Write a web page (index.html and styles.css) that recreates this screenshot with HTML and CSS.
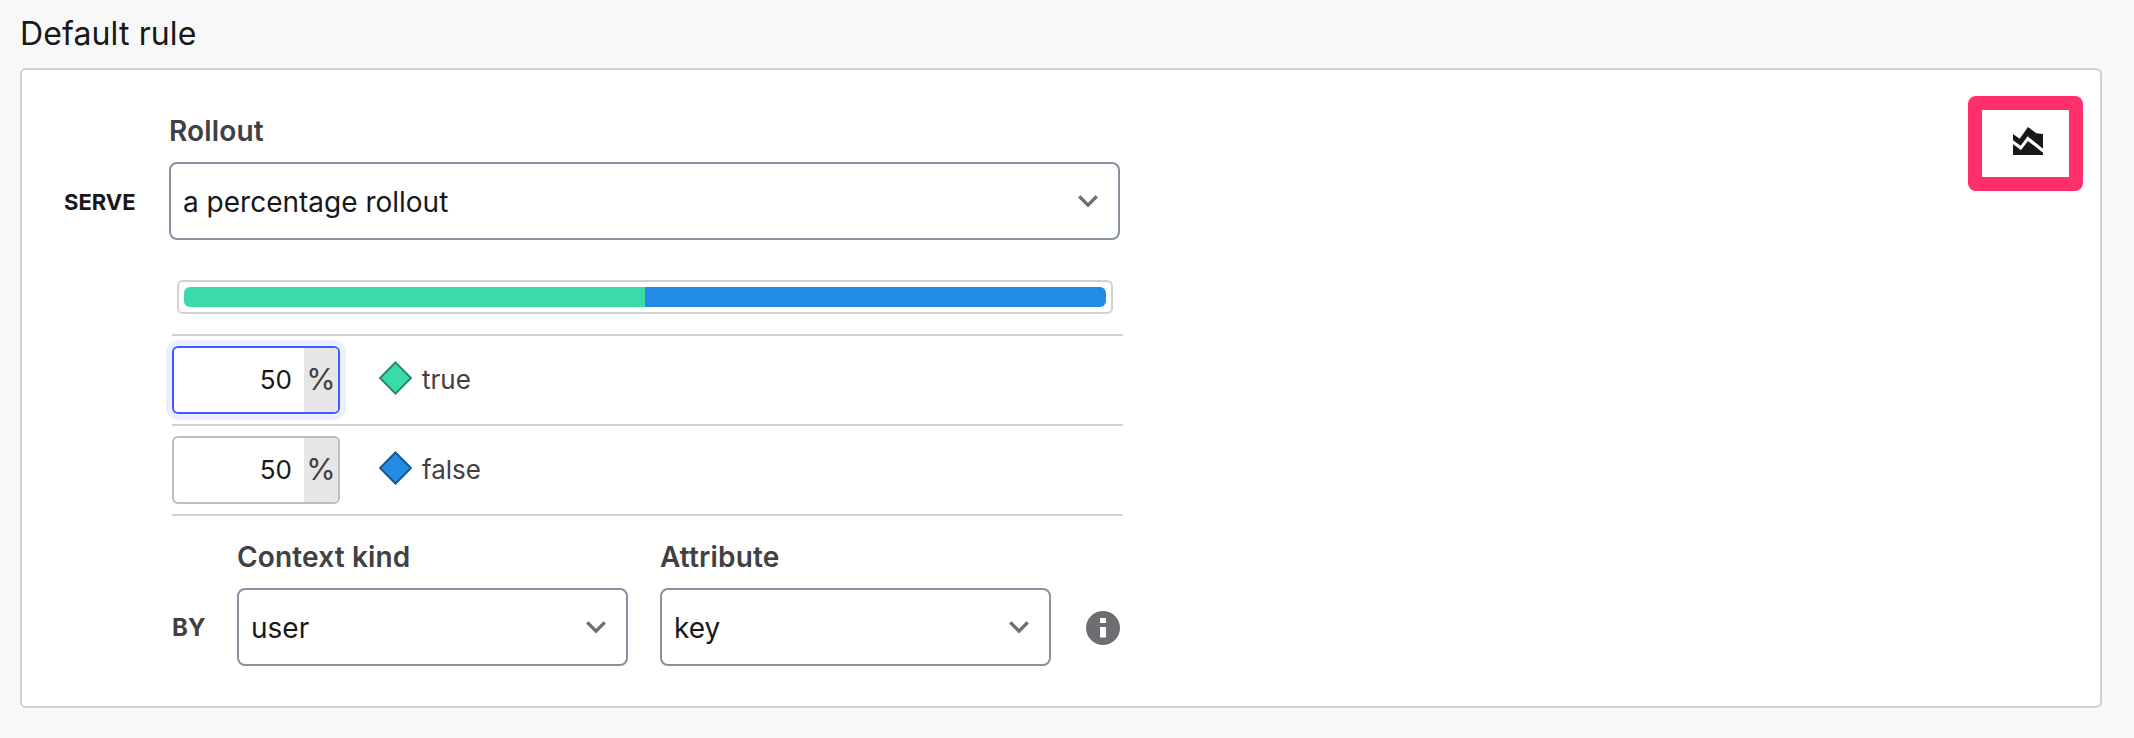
FILE: index.html
```html
<!DOCTYPE html>
<html lang="en">
<head>
<meta charset="utf-8">
<title>Default rule</title>
<link rel="stylesheet" href="styles.css">
</head>
<body>
<h1 class="title">Default rule</h1>
<section class="card">
  <div class="rule">
    <div class="serve-row">
      <span class="keyword serve">SERVE</span>
      <div class="field">
        <label class="label">Rollout</label>
        <div class="select"><span>a percentage rollout</span>
          <svg class="chevron" viewBox="0 0 20 13"><path d="M1.3 1.4 10 10.2 18.7 1.4"/></svg>
        </div>
      </div>
    </div>
    <div class="rollout">
      <div class="bar"><div class="part green"></div><div class="part blue"></div></div>
      <div class="variation">
        <div class="percent focused"><span class="value">50</span><span class="unit">%</span></div>
        <svg class="diamond" viewBox="0 0 34 34"><path class="diamond-green" d="M16.5 1.4 32 17 16.5 32.6 1 17Z"/></svg>
        <span class="name">true</span>
      </div>
      <div class="variation">
        <div class="percent"><span class="value">50</span><span class="unit">%</span></div>
        <svg class="diamond" viewBox="0 0 34 34"><path class="diamond-blue" d="M16.5 1.4 32 17 16.5 32.6 1 17Z"/></svg>
        <span class="name">false</span>
      </div>
      <div class="by-row">
        <span class="keyword by">BY</span>
        <div class="field">
          <label class="label">Context kind</label>
          <div class="select"><span>user</span>
            <svg class="chevron" viewBox="0 0 20 13"><path d="M1.3 1.4 10 10.2 18.7 1.4"/></svg>
          </div>
        </div>
        <div class="field">
          <label class="label">Attribute</label>
          <div class="select"><span>key</span>
            <svg class="chevron" viewBox="0 0 20 13"><path d="M1.3 1.4 10 10.2 18.7 1.4"/></svg>
          </div>
        </div>
        <svg class="info" viewBox="0 0 34 34"><circle cx="17" cy="17" r="17"/><path d="M14 7h6v5h-6zM14 16h6v10.500h-6z"/></svg>
      </div>
    </div>
  </div>
  <button class="chart-button" aria-label="Show chart">
    <svg class="chart" viewBox="0 0 90 85"><path d="M0 21 20 35 45 0 70 19 90 21V65L44 28 23 56 0 40ZM0 52 24 69 45 42 90 77V85H0Z"/></svg>
  </button>
</section>
</body>
</html>
```

FILE: styles.css
```css
* { box-sizing: border-box; }
body {
  margin: 0;
  padding: 0 32px 0 20px;
  height: 738px;
  background: #f8f8f8;
  color: #181818;
  font-family: Inter, "Liberation Sans", sans-serif;
}
svg { display: block; flex: none; }
.title {
  margin: 0;
  height: 68px;
  line-height: 68px;
  font-size: 32px;
  font-weight: 400;
  letter-spacing: 0.12px;
}
.card {
  display: flex;
  justify-content: space-between;
  align-items: flex-start;
  height: 640px;
  padding: 26px 17px 0 40px;
  border: 2px solid #d1d1d1;
  border-radius: 6px;
  background: #fff;
}
.rule { padding-top: 14px; }
.serve-row { display: flex; align-items: flex-end; }
.keyword {
  height: 78px;
  line-height: 80px;
  font-weight: 700;
}
.serve { width: 107px; padding-left: 2px; font-size: 22px; }
.field { width: 391px; }
.serve-row .field { width: 951px; }
.label {
  display: block;
  height: 52px;
  line-height: 42px;
  font-size: 28px;
  font-weight: 600;
  letter-spacing: 0.15px;
  color: #414042;
}
.select {
  display: flex;
  align-items: center;
  justify-content: space-between;
  height: 78px;
  padding: 0 20px 0 12px;
  border: 2px solid #8891a0;
  border-radius: 8px;
  font-size: 28px;
  line-height: 34px;
}
.select span { padding-top: 1px; }
.chevron { width: 20px; height: 13px; fill: none; stroke: #6d6e71; stroke-width: 3.4; }
.rollout { width: 951px; margin: 40px 0 0 110px; }
.bar {
  display: flex;
  width: 936px;
  height: 34px;
  margin: 0 0 20px 5px;
  padding: 5px;
  border: 2px solid #d1d1d1;
  border-radius: 6px;
}
.part { flex: 1; }
.green { background: #3adaab; border-radius: 6px 0 0 6px; }
.blue { background: #218be6; border-radius: 0 6px 6px 0; }
.variation {
  display: flex;
  align-items: center;
  height: 90px;
  border-top: 2px solid #d1d1d1;
}
.percent {
  display: flex;
  width: 168px;
  height: 68px;
  border: 2px solid #bcbcbc;
  border-radius: 6px;
  font-size: 26px;
  line-height: 64px;
}
.focused { border-color: #405bff; box-shadow: 0 0 0 6px #edefff; }
.value { width: 130px; padding-right: 12px; text-align: right; }
.unit {
  width: 34px;
  border-radius: 0 4px 4px 0;
  background: #e6e6e6;
  color: #414042;
  font-size: 30px;
  line-height: 63px;
  text-align: center;
}
.diamond { width: 34px; height: 34px; margin: 0 9px 4px 39px; stroke-width: 1.8; }
.diamond-green { fill: #3adaab; stroke: #238367; }
.diamond-blue { fill: #218be6; stroke: #14538a; }
.name { padding-bottom: 1px; font-size: 26px; color: #414042; }
.by-row {
  display: flex;
  align-items: flex-end;
  gap: 32px;
  padding-top: 20px;
  border-top: 2px solid #d1d1d1;
}
.by { width: 33px; font-size: 24px; color: #414042; }
.info { width: 34px; height: 34px; margin: 0 0 21px 3px; fill: #6d6e71; }
.info path { fill: #fff; }
.chart-button {
  display: flex;
  padding: 17px 0 0 31px;
  width: 115px;
  height: 95px;
  border: 14px solid #ff2f6c;
  border-radius: 8px;
  background: #fff;
}
.chart { width: 30px; height: 28.3px; fill: #181818; }
```
